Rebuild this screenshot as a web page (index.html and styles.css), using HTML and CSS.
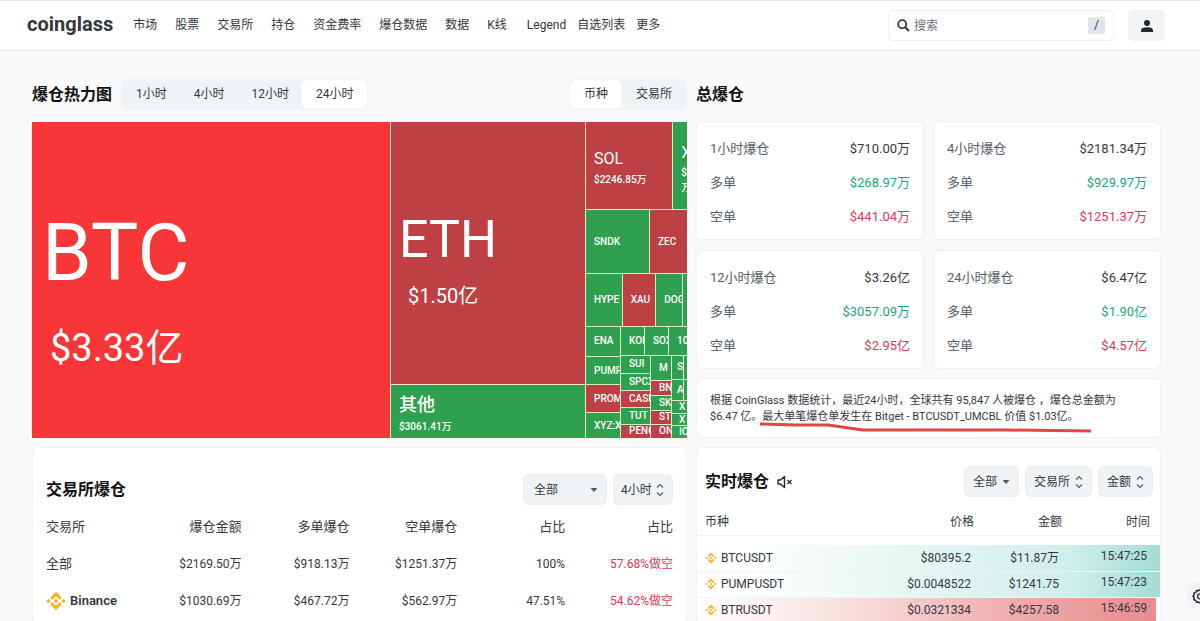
FILE: index.html
```
<!DOCTYPE html>
<html lang="zh-CN">
<head>
  <meta charset="UTF-8" />
  <meta name="viewport" content="width=device-width, initial-scale=1.0"/>
  <title>爆仓数据 - coinglass</title>
  <link rel="stylesheet" href="styles.css">
</head>
<body>
  <!-- Icons -->
  <svg class="sprite" aria-hidden="true">
    <symbol id="i-binance" viewBox="0 0 24 24">
      <path d="M12 1l7 7-2.7 2.7L12 6.4l-4.3 4.3L5 8zM12 23l-7-7 2.7-2.7 4.3 4.3 4.3-4.3L19 16zM3 9.3L5.7 12 3 14.7.3 12zM21 9.3l2.7 2.7-2.7 2.7-2.7-2.7zM12 9.3l2.7 2.7-2.7 2.7L9.3 12z" fill="#efb52c"/>
    </symbol>
    <symbol id="i-updown" viewBox="0 0 8 14">
      <path d="M1 4.5L4 1.5l3 3M1 9.5l3 3 3-3" fill="none" stroke="#555e68" stroke-width="1.2"/>
    </symbol>
    <symbol id="i-caret" viewBox="0 0 8 14">
      <path d="M.5 5h7L4 9z" fill="#555e68"/>
    </symbol>
  </svg>

  <div class="page">
    <header class="header">
      <a class="logo" href="#">coinglass</a>
      <nav class="nav">
        <a href="#">市场</a>
        <a href="#">股票</a>
        <a href="#">交易所</a>
        <a href="#">持仓</a>
        <a href="#">资金费率</a>
        <a href="#">爆仓数据</a>
        <a href="#">数据</a>
        <a href="#">K线</a>
        <span class="nav-tight">
          <a href="#">Legend</a>
          <a href="#">自选列表</a>
          <a href="#">更多</a>
        </span>
      </nav>
      <label class="search">
        <svg width="13" height="13" viewBox="0 0 13 13"><circle cx="5.200" cy="5.200" r="4" fill="none" stroke="#32383e" stroke-width="1.800"/><path d="M8.200 8.200l3.800 3.800" stroke="#32383e" stroke-width="2"/></svg>
        <input type="text" placeholder="搜索" aria-label="搜索">
        <kbd>/</kbd>
      </label>
      <button class="user" aria-label="账户">
        <svg width="12" height="12" viewBox="0 0 12 12"><circle cx="6" cy="3" r="3" fill="#25292d"/><path d="M0 12v-1.500C0 8.300 2 7.200 6 7.200s6 1.100 6 3.300V12z" fill="#25292d"/></svg>
      </button>
    </header>

    <main class="main">
      <section class="col">
        <div class="bar">
          <h2>爆仓热力图</h2>
          <div class="tabs">
            <button>1小时</button>
            <button>4小时</button>
            <button>12小时</button>
            <button class="active">24小时</button>
          </div>
          <div class="tabs tabs-right">
            <button class="active">币种</button>
            <button>交易所</button>
          </div>
        </div>

        <!-- Heatmap -->
        <div class="heatmap">
          <div class="cell hot btc"><b>BTC</b><span>$3.33亿</span></div>
          <div class="rows map-mid">
            <div class="cell red eth"><b>ETH</b><span>$1.50亿</span></div>
            <div class="cell green mid other"><b>其他</b><span>$3061.41万</span></div>
          </div>
          <div class="rows map-side">
            <div class="cols side-1">
              <div class="cell red mid"><b>SOL</b><span>$2246.85万</span></div>
              <div class="cell green mid wrap"><b>X</b><span>$ 万</span></div>
            </div>
            <div class="cols side-2">
              <div class="cell green">SNDK</div>
              <div class="cell red">ZEC</div>
            </div>
            <div class="cols side-3">
              <div class="cell green">HYPE</div>
              <div class="cell red">XAU</div>
              <div class="cell green">DOGE</div>
              <div class="cell green thin"></div>
            </div>
            <div class="cols side-4">
              <div class="rows stack-a">
                <div class="cell green">ENA</div>
                <div class="cell green">PUMP</div>
                <div class="cell red">PROM</div>
                <div class="cell green">XYZ:X</div>
              </div>
              <div class="rows stack-b">
                <div class="cols trio">
                  <div class="cell green">KOR</div>
                  <div class="cell green">SOX</div>
                  <div class="cell green">10</div>
                </div>
                <div class="cols tiny">
                  <div class="rows tiny-a">
                    <div class="cell green">SUI</div>
                    <div class="cell green">SPCX</div>
                    <div class="cell red">CASH</div>
                    <div class="cell green">TUT</div>
                    <div class="cell red">PENG</div>
                  </div>
                  <div class="rows tiny-b">
                    <div class="cell green">M</div>
                    <div class="cell red">BNB</div>
                    <div class="cell green">SKY</div>
                    <div class="cell red">STX</div>
                    <div class="cell red">ONE</div>
                  </div>
                  <div class="rows tiny-c">
                    <div class="cols sliver">
                      <div class="cell green">SI</div>
                      <div class="cell green thin"></div>
                    </div>
                    <div class="cols sliver">
                      <div class="cell green">A</div>
                      <div class="cell green thin"></div>
                    </div>
                    <div class="cell green">X</div>
                    <div class="cell green">X</div>
                    <div class="cell green">IO</div>
                  </div>
                </div>
              </div>
            </div>
          </div>
        </div>

        <div class="card exchanges">
          <div class="card-head">
            <h2>交易所爆仓</h2>
            <div class="pick pick-wide">
              <select aria-label="币种"><option>全部</option></select>
              <svg><use href="#i-caret"/></svg>
            </div>
            <div class="pick">
              <select aria-label="时间"><option>4小时</option></select>
              <svg><use href="#i-updown"/></svg>
            </div>
          </div>
          <table>
            <thead>
              <tr><th>交易所</th><th>爆仓金额</th><th>多单爆仓</th><th>空单爆仓</th><th>占比</th><th>占比</th></tr>
            </thead>
            <tbody>
              <tr><td>全部</td><td>$2169.50万</td><td>$918.13万</td><td>$1251.37万</td><td>100%</td><td class="down">57.68%做空</td></tr>
              <tr><td><a class="name" href="#"><svg width="20" height="20"><use href="#i-binance"/></svg>Binance</a></td><td>$1030.69万</td><td>$467.72万</td><td>$562.97万</td><td>47.51%</td><td class="down">54.62%做空</td></tr>
            </tbody>
          </table>
        </div>
      </section>

      <section class="col">
        <div class="bar">
          <h2>总爆仓</h2>
        </div>
        <div class="stats">
          <dl class="card stat">
            <div><dt>1小时爆仓</dt><dd>$710.00万</dd></div>
            <div><dt>多单</dt><dd class="up">$268.97万</dd></div>
            <div><dt>空单</dt><dd class="down">$441.04万</dd></div>
          </dl>
          <dl class="card stat">
            <div><dt>4小时爆仓</dt><dd>$2181.34万</dd></div>
            <div><dt>多单</dt><dd class="up">$929.97万</dd></div>
            <div><dt>空单</dt><dd class="down">$1251.37万</dd></div>
          </dl>
          <dl class="card stat">
            <div><dt>12小时爆仓</dt><dd>$3.26亿</dd></div>
            <div><dt>多单</dt><dd class="up">$3057.09万</dd></div>
            <div><dt>空单</dt><dd class="down">$2.95亿</dd></div>
          </dl>
          <dl class="card stat">
            <div><dt>24小时爆仓</dt><dd>$6.47亿</dd></div>
            <div><dt>多单</dt><dd class="up">$1.90亿</dd></div>
            <div><dt>空单</dt><dd class="down">$4.57亿</dd></div>
          </dl>
        </div>

        <div class="card note">
          <p>根据 CoinGlass 数据统计，最近24小时，全球共有 95,847 人被爆仓 ，爆仓总金额为<br>$6.47 亿。最大单笔爆仓单发生在 Bitget - BTCUSDT_UMCBL 价值 $1.03亿。</p>
          <svg class="marker" width="334" height="12" viewBox="0 0 334 12"><path d="M1 3l36 1 32 0 35 5 144 0 84 1" fill="none" stroke="#e04646" stroke-width="3"/></svg>
        </div>

        <div class="card live">
          <div class="card-head">
            <h2>实时爆仓</h2>
            <button class="mute" aria-label="静音">
              <svg width="16" height="14" viewBox="0 0 16 14"><path d="M1 5h2.500L7.500 1.500v11L3.500 9H1z" fill="none" stroke="#25292d" stroke-width="1.400" stroke-linejoin="round"/><path d="M10.500 5l4 4M14.500 5l-4 4" stroke="#25292d" stroke-width="1.300"/></svg>
            </button>
            <div class="pick">
              <select aria-label="币种"><option>全部</option></select>
              <svg><use href="#i-caret"/></svg>
            </div>
            <div class="pick">
              <select aria-label="交易所"><option>交易所</option></select>
              <svg><use href="#i-updown"/></svg>
            </div>
            <div class="pick">
              <select aria-label="金额"><option>金额</option></select>
              <svg><use href="#i-updown"/></svg>
            </div>
          </div>
          <table>
            <thead>
              <tr><th>币种</th><th>价格</th><th>金额</th><th>时间</th></tr>
            </thead>
            <tbody>
              <tr class="spacer"><td colspan="4"></td></tr>
              <tr class="long"><td><span class="name"><svg width="12" height="12"><use href="#i-binance"/></svg>BTCUSDT</span></td><td>$80395.2</td><td>$11.87万</td><td>15:47:25</td></tr>
              <tr class="long"><td><span class="name"><svg width="12" height="12"><use href="#i-binance"/></svg>PUMPUSDT</span></td><td>$0.0048522</td><td>$1241.75</td><td>15:47:23</td></tr>
              <tr class="short"><td><span class="name"><svg width="12" height="12"><use href="#i-binance"/></svg>BTRUSDT</span></td><td>$0.0321334</td><td>$4257.58</td><td>15:46:59</td></tr>
            </tbody>
          </table>
        </div>
      </section>
    </main>
  </div>

  <button class="settings" aria-label="设置">
    <svg width="16" height="16" viewBox="0 0 16 16"><path d="M8 1.500l1.500 1.300 2-.3.700 1.900 1.900.7-.3 2L15 8.500l-1.300 1.500.3 2-1.900.7-.7 1.900-2-.3L8 15l-1.500-1-2 .3-.7-1.900-1.900-.7.3-2L1 8.500l1.200-1.400-.3-2 1.900-.7.700-1.900 2 .3z" fill="none" stroke="#25292d" stroke-width="1.500" stroke-linejoin="round"/><circle cx="8" cy="8.300" r="2.500" fill="none" stroke="#25292d" stroke-width="1.300"/></svg>
  </button>
</body>
</html>
```

FILE: styles.css
```
* { box-sizing: border-box; margin: 0; padding: 0; }
body {
  font-family: Roboto, "Noto Sans CJK SC", sans-serif;
  font-size: 12px;
  line-height: 18px;
  color: #32383e;
  background: #f9f9f9;
}
a { color: inherit; text-decoration: none; }
button, input, select, kbd { font: inherit; color: inherit; border: none; background: none; }
button, select { cursor: pointer; }
h2 { font-size: 16px; line-height: 24px; font-weight: 700; color: #101214; white-space: nowrap; }
.sprite { display: none; }
.page {
  height: 100vh;
  overflow: hidden;
  display: flex;
  flex-direction: column;
}

/* header */
.header {
  display: flex;
  align-items: center;
  height: 51px;
  padding: 0 35px 0 27px;
  background: #fff;
  border-top: 1px solid #e6e6e6;
  border-bottom: 1px solid #e8e8e8;
}
.logo {
  font-size: 20px;
  line-height: 24px;
  padding-bottom: 3px;
  font-weight: 700;
  margin-right: 20px;
}
.nav, .nav-tight { display: flex; gap: 18px; white-space: nowrap; }
.nav { padding-bottom: 2px; }
.nav .nav-tight { gap: 11px; padding-left: 2px; }
.search {
  display: flex;
  align-items: center;
  gap: 4px;
  width: 226px;
  height: 31px;
  margin-left: auto;
  padding: 0 8px;
  border: 1px solid #eceff2;
  border-radius: 5px;
}
.search input { flex: 1; min-width: 0; outline: none; }
.search input::placeholder { color: #6b737b; }
.search kbd {
  width: 17px;
  line-height: 17px;
  text-align: center;
  background: #dfe7ec;
  border-radius: 2px;
}
.user {
  width: 37px;
  height: 31px;
  margin-left: 14px;
  background: #f0f4f7;
  border-radius: 5px;
}
.user svg { display: block; margin: auto; }

/* layout */
.main {
  flex: 1;
  min-height: 0;
  display: grid;
  grid-template-columns: 655fr 465fr;
  gap: 9px;
  padding: 28px 39px 0 32px;
}
.col { display: flex; flex-direction: column; min-width: 0; }
.bar { display: flex; align-items: center; height: 31px; margin-bottom: 11px; }
.tabs {
  display: flex;
  height: 31px;
  margin-left: 9px;
  padding: 1px;
  background: #eff3f6;
  border-radius: 6px;
}
.tabs-right { margin-left: auto; }
.tabs button { padding: 0 13px 2px 14px; border-radius: 6px; }
.tabs-right button { padding: 0 14px 2px; }
.tabs .active { background: #fff; }
.card {
  background: #fff;
  border: 1px solid #eff0f1;
  border-radius: 6px;
}

/* heatmap */
.heatmap {
  display: grid;
  grid-template-columns: 358fr 194fr 101fr;
  gap: 1px;
  height: 316px;
  margin: 1px 0 9px;
  background: #f3e3cf;
}
.rows, .cols { display: grid; gap: 1px; min-width: 0; min-height: 0; background: #d5ecc4; }
.cell {
  display: flex;
  flex-direction: column;
  justify-content: center;
  min-width: 0;
  min-height: 0;
  overflow: hidden;
  padding-left: 8px;
  font-size: 10px;
  line-height: 12px;
  font-weight: 500;
  color: #fff;
  white-space: nowrap;
}
.cell b { font-weight: 400; }
.cell.thin { padding: 0; }
.hot { background: #f73638; }
.red { background: #bd4045; }
.green { background: #2f9f50; }
.btc { padding: 36px 0 0 10px; }
.btc b { font-size: 80px; line-height: 100px; }
.btc span { padding-left: 8px; font-size: 38px; line-height: 90px; font-weight: 400; }
.map-mid { grid-template-rows: 262fr 53fr; background: #f3e3cf; }
.map-side { grid-template-rows: 87fr 63fr 52fr 111fr; }
.eth { padding-top: 26px; }
.eth b { font-size: 52px; line-height: 60px; }
.eth span { padding-left: 9px; font-size: 20px; line-height: 52px; font-weight: 400; }
.mid { padding-top: 4px; }
.mid b { font-size: 16px; line-height: 24px; }
.mid span { line-height: 18px; }
.other b { font-size: 18px; line-height: 26px; font-weight: 500; }
.wrap { white-space: normal; }
.wrap span { line-height: 15px; }
.side-1 { grid-template-columns: 87fr 14fr; }
.side-2 { grid-template-columns: 63fr 37fr; }
.side-3 { grid-template-columns: 36fr 33fr 26fr 4fr; }
.side-4 { grid-template-columns: 34fr 66fr; }
.stack-a { grid-template-rows: 29fr 28fr 27fr 25fr; }
.stack-b { grid-template-rows: 28fr 83fr; }
.trio { grid-template-columns: 23fr 23fr 18fr; }
.tiny { grid-template-columns: 29fr 20fr 15fr; }
.tiny-a { grid-template-rows: 17fr 16fr 16fr 16fr 13fr; }
.tiny-b { grid-template-rows: 24fr 14fr 14fr 13fr 13fr; }
.tiny-c { grid-template-rows: 23fr 21fr 12fr 11fr 12fr; }
.tiny-c .cell { padding-left: 7px; }
.sliver { grid-template-columns: 12fr 3fr; }
.tiny-c .sliver .cell { padding-left: 5px; }
.tiny-c .sliver .thin { padding: 0; }

/* selects */
.card-head { display: flex; align-items: center; gap: 6px; height: 31px; }
.card-head h2 { margin-right: auto; }
.pick { position: relative; }
.pick select {
  display: block;
  height: 31px;
  padding: 0 20px 0 7px;
  appearance: none;
  background: #eff3f6;
  border: 1px solid #e9eef2;
  border-radius: 6px;
}
.pick-wide select { width: 84px; padding-left: 10px; }
.pick svg {
  position: absolute;
  right: 9px;
  top: 9px;
  width: 8px;
  height: 14px;
  pointer-events: none;
}

/* tables */
table { width: 100%; border-collapse: collapse; table-layout: fixed; }
th { font-weight: 400; text-align: right; }
td { text-align: right; white-space: nowrap; }
th:first-child, td:first-child { text-align: left; }
.name { display: flex; align-items: center; gap: 4px; }
.up { color: #1aa67c; }
.down { color: #dc3a55; }
.exchanges { flex: 1; padding: 26px 13px 0; }
.exchanges table { margin-top: 3px; }
.exchanges tr { height: 37px; }
.exchanges th:first-child { width: 14%; }
.exchanges th, .exchanges td:first-child { font-size: 13px; }
.exchanges .name { font-weight: 600; }

/* totals */
.stats { display: grid; grid-template-columns: 1fr 1fr; gap: 10px 9px; }
.stat { padding: 10px 13px 5px; font-size: 13px; line-height: 34px; }
.stat div { display: flex; justify-content: space-between; }
.stat dt { color: #555e68; }
.note {
  position: relative;
  margin: 9px 0;
  padding: 14px 13px 12px;
  font-size: 11px;
  line-height: 16px;
  white-space: nowrap;
}
.marker { position: absolute; left: 62px; top: 42px; }

/* live orders */
.live { flex: 1; min-height: 0; padding-top: 18px; overflow: hidden; }
.live .card-head { padding: 0 7px 0 8px; }
.live .card-head h2 { margin-right: 0; }
.live .pick select { padding-left: 8px; }
.mute { margin-right: auto; padding-left: 2px; }
.mute svg { display: block; }
.live th, .live td { height: 26px; line-height: 16px; }
.live th { padding-right: 10px; border-bottom: 1px solid #f1f1f1; }
.live table { margin-top: 12px; }
.live th:nth-child(1) { width: 38%; }
.live th:nth-child(3) { width: 19%; }
.live th:nth-child(4) { width: 19%; }
.live td { padding-right: 13px; }
.live th:first-child, .live td:first-child { padding-left: 8px; }
.live td:last-child { padding-bottom: 4px; }
.live .spacer td { height: 10px; padding: 0; }
.long { background: linear-gradient(to right, #fff 10%, #e3f5f2 50%, #d0efea 80%, #a5dcd3); border-bottom: 1px solid #edf5f4; }
.short { background: linear-gradient(to right, #fff, #f9dcdc 35%, #efaaaa 70%, #e88c8c) no-repeat; background-size: calc(100% - 4px) 100%; }

.settings {
  position: fixed;
  right: 0;
  top: 582px;
  width: 13px;
  height: 27px;
  padding-left: 5px;
  overflow: hidden;
  background: #f0f4f7;
  border-radius: 5px 0 0 5px;
}
.settings svg { display: block; }
```
